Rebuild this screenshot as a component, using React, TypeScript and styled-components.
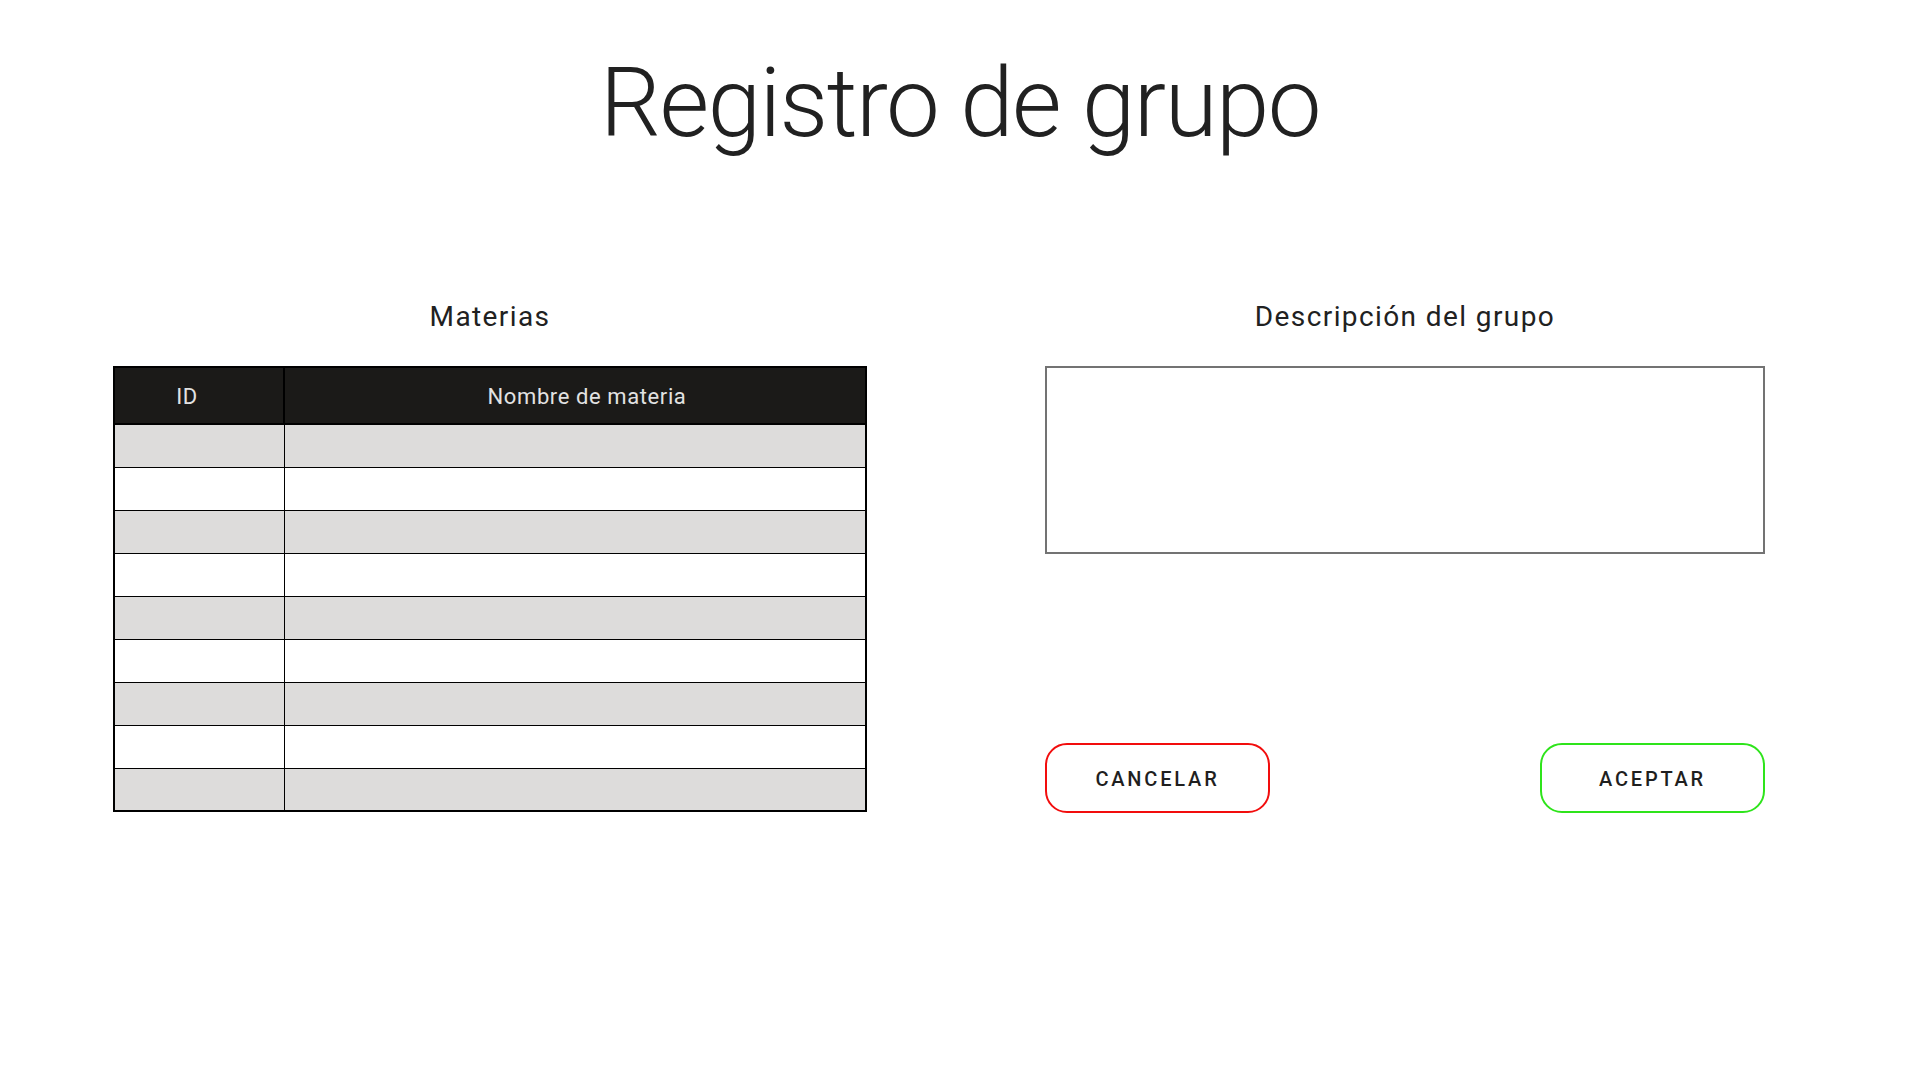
import React from "react";
import styled, { createGlobalStyle } from "styled-components";

const GlobalStyle = createGlobalStyle`
  html, body {
    margin: 0;
    padding: 0;
    background: #ffffff;
    font-family: Roboto, "Liberation Sans", Arial, sans-serif;
    color: #212121;
  }
  * { box-sizing: border-box; }
`;

const Page = styled.main`
  width: 1920px;
  min-height: 1080px;
  padding-top: 47px;
  background: #fff;
`;

const Title = styled.h1`
  margin: 0;
  text-align: center;
  font-family: Roboto, "Liberation Sans", sans-serif;
  font-weight: 300;
  font-size: 96px;
  line-height: 112px;
  letter-spacing: -1.5px;
  color: #212121;
`;

const Columns = styled.div`
  display: grid;
  grid-template-columns: 754px 720px;
  column-gap: 178px;
  padding-left: 113px;
  margin-top: 141px;
`;

const Column = styled.section`
  display: flex;
  flex-direction: column;
`;

const Heading = styled.h2`
  margin: 0 0 33px;
  padding-top: 1px;
  text-align: center;
  font-family: Roboto, "Liberation Sans", sans-serif;
  font-weight: 400;
  font-size: 28px;
  line-height: 32px;
  letter-spacing: 1.4px;
  color: #212121;
`;

const Table = styled.table`
  width: 754px;
  border-collapse: collapse;
  border: 2px solid #000;
  table-layout: fixed;
`;

const HeadCell = styled.th<{ $w?: number; $shift: number }>`
  width: ${(p) => (p.$w ? `${p.$w}px` : "auto")};
  height: 57px;
  background: #1b1a18;
  color: #e2e2e2;
  font-family: Roboto, "Liberation Sans", sans-serif;
  font-weight: 400;
  font-size: 22px;
  letter-spacing: 0.6px;
  text-align: center;
  border: 2px solid #000;
  padding: 2px ${(p) => (p.$shift < 0 ? -p.$shift * 2 : 0)}px 0
    ${(p) => (p.$shift > 0 ? p.$shift * 2 : 0)}px;
`;

const Row = styled.tr<{ $shaded: boolean }>`
  height: 43px;
  background: ${(p) => (p.$shaded ? "#dddcdb" : "#ffffff")};
`;

const Cell = styled.td`
  border: 1.6px solid #000;
  padding: 0;
`;

const RightPanel = styled.div`
  flex: 1;
  display: flex;
  flex-direction: column;
  justify-content: space-between;
`;

const DescriptionBox = styled.textarea`
  width: 720px;
  height: 188px;
  border: 2px solid #737373;
  border-radius: 0;
  resize: none;
  outline: none;
  padding: 12px;
  font-family: Roboto, "Liberation Sans", sans-serif;
  font-size: 20px;
  background: #fff;
  display: block;
`;

const ButtonRow = styled.div`
  display: flex;
  justify-content: space-between;
  transform: translateY(1px);
`;

const ActionButton = styled.button<{ $color: string }>`
  width: 225px;
  height: 70px;
  border: 2px solid ${(p) => p.$color};
  border-radius: 22px;
  background: #fff;
  color: #1f1f1f;
  font-family: Roboto, "Liberation Sans", sans-serif;
  font-weight: 500;
  font-size: 20px;
  letter-spacing: 2.8px;
  text-transform: uppercase;
  padding: 1px 0 0;
  cursor: pointer;
`;

const rows = Array.from({ length: 9 }, (_, i) => i);

export default function App() {
  return (
    <>
      <GlobalStyle />
      <Page>
        <Title>Registro de grupo</Title>
        <Columns>
          <Column>
            <Heading>Materias</Heading>
            <Table>
              <thead>
                <tr>
                  <HeadCell $w={170} $shift={-12}>
                    ID
                  </HeadCell>
                  <HeadCell $shift={12}>Nombre de materia</HeadCell>
                </tr>
              </thead>
              <tbody>
                {rows.map((i) => (
                  <Row key={i} $shaded={i % 2 === 0}>
                    <Cell />
                    <Cell />
                  </Row>
                ))}
              </tbody>
            </Table>
          </Column>
          <Column>
            <Heading>Descripción del grupo</Heading>
            <RightPanel>
              <DescriptionBox />
              <ButtonRow>
                <ActionButton $color="#f20d0d">Cancelar</ActionButton>
                <ActionButton $color="#2ee41b">Aceptar</ActionButton>
              </ButtonRow>
            </RightPanel>
          </Column>
        </Columns>
      </Page>
    </>
  );
}
